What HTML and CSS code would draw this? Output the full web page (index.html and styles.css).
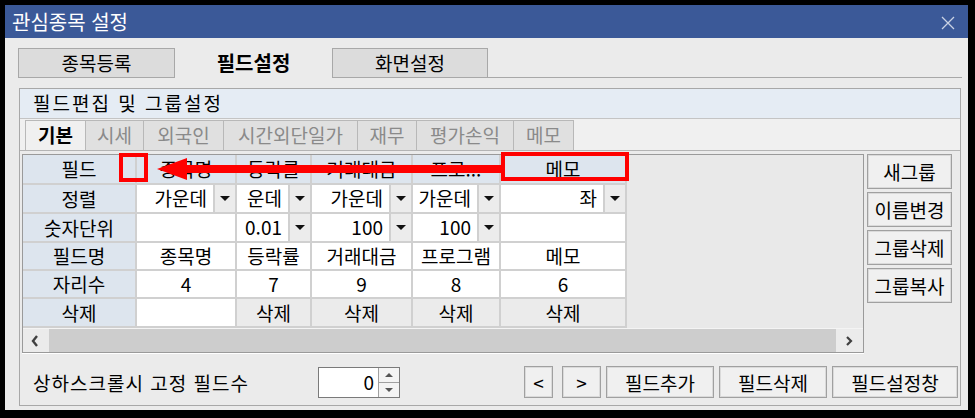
FILE: index.html
```html
<!DOCTYPE html>
<html lang="ko">
<head>
    <meta charset="UTF-8">
    <title>관심종목 설정</title>
    <link rel="stylesheet" href="styles.css">
</head>
<body>
    <div class="window">
        <div class="titlebar">
            <span class="title">관심종목 설정</span>
            <svg class="close" width="14" height="14" viewBox="0 0 14 14">
                <path d="M1 1L13 13M13 1L1 13" stroke="#c9d2e4" stroke-width="1.3" fill="none"/>
            </svg>
        </div>

        <div class="main">
            <div class="tabs">
                <div class="tab">종목등록</div>
                <div class="tab active">필드설정</div>
                <div class="tab last">화면설정</div>
                <div class="tab-fill"></div>
            </div>

            <div class="group">
                <div class="group-head">필드편집 및 그룹설정</div>

                <div class="subtabs">
                    <div class="subtab active w60">기본</div>
                    <div class="subtab w58">시세</div>
                    <div class="subtab w80">외국인</div>
                    <div class="subtab w134">시간외단일가</div>
                    <div class="subtab w59">재무</div>
                    <div class="subtab w97">평가손익</div>
                    <div class="subtab w60">메모</div>
                </div>

                <div class="group-body">
                    <div class="grid-wrap">
                        <div class="grid">
                            <table>
                                <colgroup>
                                    <col class="c-label">
                                    <col class="c1">
                                    <col class="c2">
                                    <col class="c3">
                                    <col class="c4">
                                    <col class="c5">
                                </colgroup>
                                <tr class="r-head">
                                    <td class="lbl">필드</td>
                                    <td class="hd">종목명</td>
                                    <td class="hd">등락률</td>
                                    <td class="hd">거래대금</td>
                                    <td class="hd">프로...</td>
                                    <td class="hd">메모</td>
                                </tr>
                                <tr class="r29">
                                    <td class="lbl">정렬</td>
                                    <td><div class="combo"><span class="val">가운데</span><span class="drop"><i></i></span></div></td>
                                    <td><div class="combo"><span class="val">운데</span><span class="drop"><i></i></span></div></td>
                                    <td><div class="combo"><span class="val">가운데</span><span class="drop"><i></i></span></div></td>
                                    <td><div class="combo"><span class="val">가운데</span><span class="drop"><i></i></span></div></td>
                                    <td><div class="combo"><span class="val">좌</span><span class="drop"><i></i></span></div></td>
                                </tr>
                                <tr class="r29">
                                    <td class="lbl">숫자단위</td>
                                    <td></td>
                                    <td><div class="combo"><span class="val">0.01</span><span class="drop"><i></i></span></div></td>
                                    <td><div class="combo"><span class="val">100</span><span class="drop"><i></i></span></div></td>
                                    <td><div class="combo"><span class="val">100</span><span class="drop"><i></i></span></div></td>
                                    <td></td>
                                </tr>
                                <tr class="r28">
                                    <td class="lbl">필드명</td>
                                    <td>종목명</td>
                                    <td>등락률</td>
                                    <td>거래대금</td>
                                    <td>프로그램</td>
                                    <td>메모</td>
                                </tr>
                                <tr class="r28">
                                    <td class="lbl">자리수</td>
                                    <td>4</td>
                                    <td>7</td>
                                    <td>9</td>
                                    <td>8</td>
                                    <td>6</td>
                                </tr>
                                <tr class="r29">
                                    <td class="lbl">삭제</td>
                                    <td></td>
                                    <td class="del">삭제</td>
                                    <td class="del">삭제</td>
                                    <td class="del">삭제</td>
                                    <td class="del">삭제</td>
                                </tr>
                            </table>

                            <div class="hscroll">
                                <div class="sb-btn">
                                    <svg width="26" height="24" viewBox="0 0 26 24"><path d="M14 7L10 12L14 17" stroke="#404040" stroke-width="2.4" fill="none"/></svg>
                                </div>
                                <div class="sb-thumb"></div>
                                <div class="sb-btn">
                                    <svg width="27" height="24" viewBox="0 0 27 24"><path d="M11 8L15 12L11 16" stroke="#404040" stroke-width="2.2" fill="none"/></svg>
                                </div>
                            </div>
                        </div>

                        <!-- 강조 표시 (빨간 박스와 화살표) -->
                        <svg class="mark" width="640" height="40" viewBox="0 0 640 40">
                            <rect x="99" y="5" width="25" height="25" fill="none" stroke="#f00" stroke-width="4"/>
                            <rect x="481" y="4" width="124" height="25" fill="none" stroke="#f00" stroke-width="4"/>
                            <rect x="161" y="15" width="318" height="8" fill="#f00"/>
                            <polygon points="135,19 165,8 165,30" fill="#f00"/>
                        </svg>
                    </div>

                    <div class="side">
                        <button class="btn side-btn">새그룹</button>
                        <button class="btn side-btn">이름변경</button>
                        <button class="btn side-btn">그룹삭제</button>
                        <button class="btn side-btn">그룹복사</button>
                    </div>
                </div>

                <div class="bottom">
                    <span class="fix-label">상하스크롤시 고정 필드수</span>
                    <div class="spin">
                        <span class="spin-val">0</span>
                        <div class="spin-btns">
                            <span class="up"><i></i></span>
                            <span class="down"><i></i></span>
                        </div>
                    </div>
                    <div class="actions">
                        <button class="btn nav prev">&lt;</button>
                        <button class="btn nav next">&gt;</button>
                        <button class="btn act w108">필드추가</button>
                        <button class="btn act w108">필드삭제</button>
                        <button class="btn act w126">필드설정창</button>
                    </div>
                </div>
            </div>
        </div>
    </div>
</body>
</html>
```

FILE: styles.css
```css
* {
    box-sizing: border-box;
}

body {
    margin: 0;
    height: 418px;
    background-color: #000;
    font-family: "Noto Sans CJK KR", "Noto Sans", sans-serif;
    font-size: 19px;
    color: #000;
    overflow: hidden;
}

.window {
    width: 963px;
    height: 405px;
    margin: 5px 0 0 5px;
    background-color: #ebebeb;
    display: flex;
    flex-direction: column;
}

.titlebar {
    height: 33px;
    background-color: #3b5998;
    color: #fff;
    display: flex;
    align-items: center;
    padding: 0 13px 0 7px;
}

.title {
    flex: 1;
    font-size: 20px;
    line-height: 1;
}

.close {
    margin-top: 2px;
}

.main {
    flex: 1;
    padding: 10px 6px 0 13px;
    display: flex;
    flex-direction: column;
}

/* 상단 탭 */
.tabs {
    display: flex;
    height: 30px;
}

.tab {
    width: 157px;
    background-color: #dcdcdc;
    border: 1px solid #a8a8a8;
    text-align: center;
    line-height: 27px;
}

.tab.last {
    width: 156px;
}

.tab.active {
    background-color: transparent;
    border-color: transparent;
    font-weight: bold;
    font-size: 20px;
}

.tab-fill {
    flex: 1;
    border-bottom: 1px solid #a8a8a8;
}

/* 그룹 박스 */
.group {
    margin: 10px 0 0 1px;
    width: 942px;
    height: 318px;
    border: 1px solid #a8a8a8;
    display: flex;
    flex-direction: column;
}

.group-head {
    height: 30px;
    background-color: #e5ecf4;
    border-bottom: 1px solid #c4c4c4;
    padding-left: 13px;
    line-height: 28px;
    letter-spacing: 2px;
}

.subtabs {
    height: 32px;
    background-color: #f0f0f0;
    border-bottom: 1px solid #b4b4b4;
    padding: 1px 0 0 5px;
    display: flex;
}

.subtab {
    height: 30px;
    border: 1px solid #b8b8b8;
    border-bottom: none;
    margin-right: -1px;
    background-color: #e0e0e0;
    color: #8a8a8a;
    text-align: center;
    line-height: 28px;
}

.subtab.active {
    background-color: #f0f0f0;
    color: #000;
    font-weight: bold;
}

.w58 { width: 59px; }
.w59 { width: 60px; }
.w60 { width: 61px; }
.w80 { width: 81px; }
.w97 { width: 98px; }
.w134 { width: 135px; }

.group-body {
    display: flex;
    padding: 3px 0 0 2px;
}

/* 그리드 */
.grid-wrap {
    position: relative;
    width: 842px;
    height: 199px;
}

.grid {
    height: 100%;
    border: 1px solid #9a9a9a;
    box-shadow: 0 1px 0 #fff;
    background-color: #e9e9e9;
    display: flex;
    flex-direction: column;
}

table {
    border-collapse: collapse;
    table-layout: fixed;
    width: 603px;
}

.c-label { width: 113px; }
.c1 { width: 100px; }
.c2 { width: 75px; }
.c3 { width: 101px; }
.c4 { width: 88px; }
.c5 { width: 126px; }

td {
    border: 2px solid #d0d0d0;
    background-color: #fff;
    padding: 0;
    text-align: center;
    vertical-align: middle;
    line-height: 24px;
    white-space: nowrap;
    overflow: hidden;
}

table tr:first-child td {
    border-top: none;
}

table td:first-child {
    border-left: none;
}

.r-head td {
    height: 29px;
}

.r29 td {
    height: 29px;
}

.r28 td {
    height: 28px;
}

td.lbl,
td.hd {
    background-color: #dde5ee;
}

td.del {
    background-color: #ebebeb;
}

.combo {
    display: flex;
    height: 27px;
}

.combo .val {
    flex: 1;
    text-align: right;
    padding-right: 6px;
    line-height: 26px;
}

.combo .drop {
    width: 22px;
    background-color: #ececec;
    border-left: 2px solid #d0d0d0;
    display: flex;
    align-items: center;
    justify-content: center;
}

.combo .drop i {
    width: 0;
    height: 0;
    border-left: 5px solid transparent;
    border-right: 5px solid transparent;
    border-top: 5px solid #111;
}

.hscroll {
    margin-top: auto;
    height: 24px;
    display: flex;
    border-top: 1px solid #f4f4f4;
}

.sb-btn {
    width: 26px;
    background-color: #ebebeb;
}

.sb-btn:last-child {
    width: 27px;
}

.sb-btn svg {
    display: block;
}

.sb-thumb {
    flex: 1;
    background-color: #cdcdcd;
}

.mark {
    position: absolute;
    left: 0;
    top: -4px;
    pointer-events: none;
}

/* 오른쪽 버튼 */
.side {
    margin-left: 3px;
    display: flex;
    flex-direction: column;
    gap: 3px;
}

.btn {
    font-family: inherit;
    font-size: 19px;
    color: #000;
    background-color: #f0f0f0;
    border: 1px solid #a0a0a0;
    box-shadow: inset 0 0 0 1px #dadada;
    padding: 0;
    line-height: 1;
    cursor: pointer;
}

.side-btn {
    width: 85px;
    height: 35px;
}

/* 하단 */
.bottom {
    margin-top: 13px;
    height: 32px;
    display: flex;
    align-items: center;
    padding: 0 2px 0 13px;
}

.fix-label {
    width: 285px;
    letter-spacing: 1px;
}

.spin {
    width: 82px;
    height: 31px;
    border: 1px solid #7a7a7a;
    background-color: #fff;
    display: flex;
}

.spin-val {
    flex: 1;
    text-align: right;
    padding-right: 4px;
    line-height: 28px;
}

.spin-btns {
    width: 21px;
    display: flex;
    flex-direction: column;
    border-left: 1px solid #a0a0a0;
}

.spin-btns span {
    flex: 1;
    background-color: #f4f4f4;
    display: flex;
    align-items: center;
    justify-content: center;
}

.spin-btns .up {
    border-bottom: 1px solid #a0a0a0;
}

.spin-btns .up i {
    border-left: 4px solid transparent;
    border-right: 4px solid transparent;
    border-bottom: 4px solid #555;
}

.spin-btns .down i {
    border-left: 4px solid transparent;
    border-right: 4px solid transparent;
    border-top: 4px solid #555;
}

.actions {
    margin-left: auto;
    display: flex;
    gap: 5px;
    height: 32px;
}

.btn.nav,
.btn.act {
    height: 32px;
}

.prev {
    width: 29px;
    margin-right: 4px;
}

.next {
    width: 39px;
}

.w108 { width: 108px; }
.w126 { width: 126px; }
```
